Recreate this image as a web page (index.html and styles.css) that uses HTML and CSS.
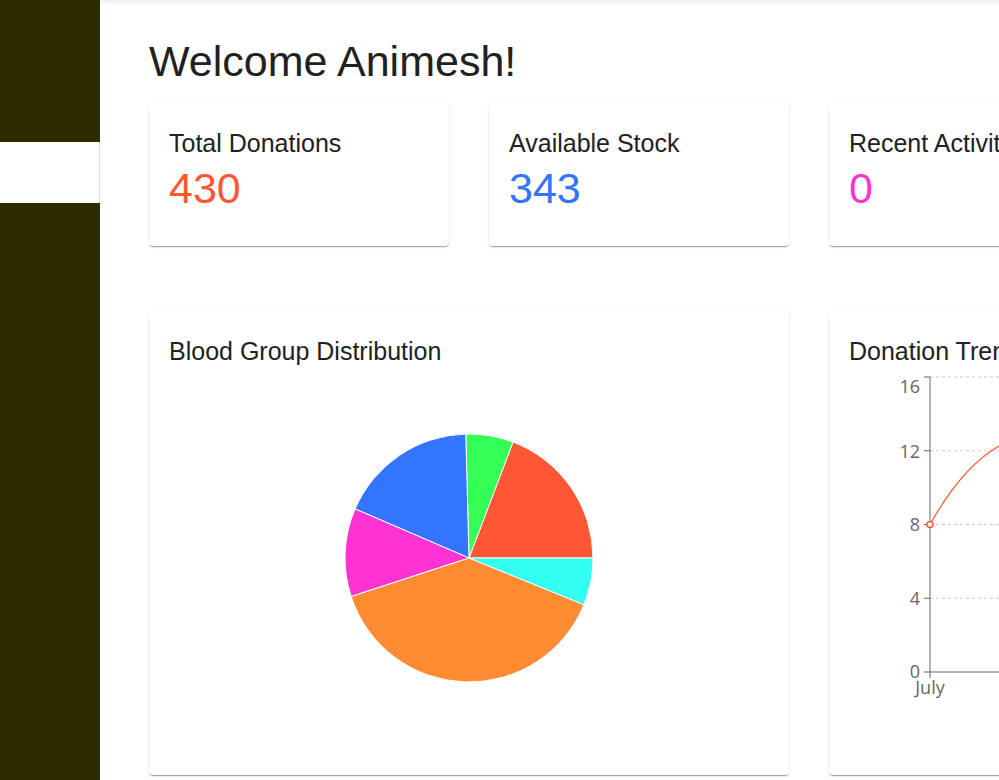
FILE: index.html
```html
<!DOCTYPE html>
<html lang="en">
<head>
<meta charset="utf-8">
<title>Dashboard</title>
<link rel="stylesheet" href="styles.css">
</head>
<body>
<div class="app">
  <aside class="sidebar">
    <div class="sidebar-active"></div>
  </aside>
  <main class="main">
    <h1 class="welcome">Welcome Animesh!</h1>
    <div class="stats">
      <section class="card stat-card">
        <h2 class="card-title">Total Donations</h2>
        <div class="stat-value red">430</div>
      </section>
      <section class="card stat-card">
        <h2 class="card-title">Available Stock</h2>
        <div class="stat-value blue">343</div>
      </section>
      <section class="card stat-card">
        <h2 class="card-title">Recent Activity</h2>
        <div class="stat-value pink">0</div>
      </section>
    </div>
    <div class="charts">
      <section class="card chart-card">
        <h2 class="card-title">Blood Group Distribution</h2>
        <svg class="chart" width="600" height="392" viewBox="0 0 600 392">
          <g class="pie">
            <path fill="#FF5733" d="M300,192 L424,192 A124,124 0 0 0 344,76.1 Z"/>
            <path fill="#33FF57" d="M300,192 L344,76.1 A124,124 0 0 0 296.75,68.04 Z"/>
            <path fill="#3375FF" d="M300,192 L296.75,68.04 A124,124 0 0 0 186.11,142.95 Z"/>
            <path fill="#FF33D4" d="M300,192 L186.11,142.95 A124,124 0 0 0 182.14,230.52 Z"/>
            <path fill="#FF8C33" d="M300,192 L182.14,230.52 A124,124 0 0 0 414.89,238.65 Z"/>
            <path fill="#33FFF3" d="M300,192 L414.89,238.65 A124,124 0 0 0 424,192 Z"/>
          </g>
        </svg>
      </section>
      <section class="card chart-card">
        <h2 class="card-title">Donation Trends</h2>
        <svg class="chart" width="600" height="392" viewBox="0 0 600 392">
          <g class="grid">
            <line x1="81" y1="11" x2="600" y2="11"/>
            <line x1="81" y1="84.75" x2="600" y2="84.75"/>
            <line x1="81" y1="158.5" x2="600" y2="158.5"/>
            <line x1="81" y1="232.25" x2="600" y2="232.25"/>
          </g>
          <g class="axis">
            <line x1="81" y1="11" x2="81" y2="306"/>
            <line x1="81" y1="306" x2="600" y2="306"/>
            <line x1="75" y1="11" x2="81" y2="11"/>
            <line x1="75" y1="84.75" x2="81" y2="84.75"/>
            <line x1="75" y1="158.5" x2="81" y2="158.5"/>
            <line x1="75" y1="232.25" x2="81" y2="232.25"/>
            <line x1="75" y1="306" x2="81" y2="306"/>
            <line x1="81" y1="306" x2="81" y2="312"/>
          </g>
          <g class="tick-labels">
            <text x="71" y="26.9" text-anchor="end">16</text>
            <text x="71" y="91.5" text-anchor="end">12</text>
            <text x="71" y="165.3" text-anchor="end">8</text>
            <text x="71" y="238.5" text-anchor="end">4</text>
            <text x="71" y="312" text-anchor="end">0</text>
            <text x="81" y="328" text-anchor="middle">July</text>
          </g>
          <path class="trend-line" d="M81,158.5 C98,128 122,96 150,80 C176,60 205,46 240,38"/>
          <circle class="trend-dot" cx="81" cy="158.5" r="3"/>
        </svg>
      </section>
    </div>
  </main>
</div>
</body>
</html>
```
FILE: styles.css
```css
html, body {
  margin: 0;
  padding: 0;
  overflow: hidden;
  background: #ffffff;
}

.app {
  display: flex;
  height: 100vh;
  font-family: "Liberation Sans", Arial, sans-serif;
}

.sidebar {
  flex: 0 0 100px;
  width: 100px;
  background: #2c2c00;
  display: flex;
  flex-direction: column;
}

.sidebar-active {
  margin-top: 142px;
  height: 61px;
  width: 99px;
  background: #ffffff;
  border-right: 1px solid #dcdcdc;
}

.main {
  flex: 1 1 auto;
  min-width: 0;
  overflow: hidden;
  padding: 37px 0 0 49px;
  background: linear-gradient(rgba(0, 0, 0, 0.07), rgba(0, 0, 0, 0) 6px), #ffffff;
}

.welcome {
  margin: 0 0 17px;
  font-size: 43px;
  line-height: 49px;
  font-weight: 400;
  color: #212121;
  white-space: nowrap;
}

.stats {
  display: flex;
  gap: 40px;
}

.charts {
  display: flex;
  gap: 40px;
  margin-top: 65px;
}

.card {
  flex: 0 0 auto;
  box-sizing: border-box;
  background: #ffffff;
  border-radius: 4px;
  box-shadow: 0 2px 1px -1px rgba(0, 0, 0, 0.2), 0 1px 1px 0 rgba(0, 0, 0, 0.14), 0 1px 3px 0 rgba(0, 0, 0, 0.12);
  padding: 26px 20px 0;
}

.stat-card {
  width: 300px;
  height: 143px;
}

.chart-card {
  width: 640px;
  height: 464px;
}

.card-title {
  margin: 0;
  font-size: 25px;
  line-height: 29px;
  font-weight: 400;
  color: #212121;
  white-space: nowrap;
}

.stat-value {
  margin-top: 5px;
  font-size: 43px;
  line-height: 50px;
}

.red { color: #FF5733; }
.blue { color: #3375FF; }
.pink { color: #FF33D4; }

.chart {
  display: block;
  overflow: hidden;
}

.pie path {
  stroke: #ffffff;
  stroke-width: 1;
}

.grid line {
  stroke: #cccccc;
  stroke-width: 1;
  stroke-dasharray: 3 3;
}

.axis line {
  stroke: #666666;
  stroke-width: 1;
}

.tick-labels text {
  font-family: "Open Sans", "Noto Sans", sans-serif;
  font-size: 18px;
  fill: #666666;
}

.trend-line {
  fill: none;
  stroke: #FF5733;
  stroke-width: 1.2;
}

.trend-dot {
  fill: #ffffff;
  stroke: #FF5733;
  stroke-width: 1.5;
}
```
